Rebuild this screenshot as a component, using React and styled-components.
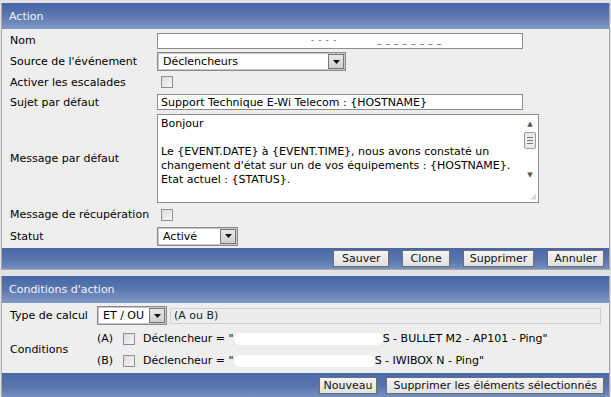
import React from 'react'
import styled, { createGlobalStyle } from 'styled-components'

const GlobalStyle = createGlobalStyle`
  html, body {
    margin: 0;
    padding: 0;
    background: #e2e2e2;
  }
  body {
    font-family: "DejaVu Sans", Verdana, sans-serif;
    font-size: 11px;
    color: #000;
  }
`

const Page = styled.div`
  width: 611px;
  padding-top: 3px;
  display: flex;
  flex-direction: column;
  gap: 6px;
`

const Panel = styled.div`
  margin: 0 1px 0 1px;
  border: 1px solid #a9a9a9;
  border-top: none;
  background: #eeeeee;
  display: flex;
  flex-direction: column;
`

const Bar = styled.div`
  height: ${p => p.$h}px;
  background: linear-gradient(to bottom, #4565a4 0%, #5b78b0 50%, #8199c5 100%);
  color: #f4f6fb;
  display: flex;
  align-items: center;
  padding: 0 7px;
  box-sizing: border-box;
`

const Footer = styled(Bar)`
  justify-content: flex-end;
  gap: ${p => p.$gap}px;
  padding: 0 5px 0 0;
  background: linear-gradient(to bottom, #4a68a6 0%, #5a77af 60%, #7590c0 100%);
`

const Body = styled.div`
  display: flex;
  flex-direction: column;
  padding: 1px 0;
`

const Row = styled.div`
  display: grid;
  grid-template-columns: ${p => p.$label || 155}px 1fr;
  align-items: center;
  height: ${p => p.$h}px;
`

const Label = styled.div`
  padding-left: 8px;
  white-space: nowrap;
`

const Field = styled.div`
  display: flex;
  align-items: center;
  gap: ${p => p.$gap || 8}px;
`

const TextBox = styled.div`
  width: ${p => p.$w}px;
  height: 16px;
  box-sizing: border-box;
  border: 1px solid #8c8c8c;
  background: #fff;
  padding: 0 3px;
  display: flex;
  align-items: center;
  white-space: nowrap;
  overflow: hidden;
`

const ReadBox = styled(TextBox)`
  border-color: #cfcfcf;
  background: #ececec;
  color: #222;
`

const Redacted = styled.span`
  color: #555;
  letter-spacing: 1px;
  font-size: 8px;
  margin-left: ${p => p.$ml}px;
`

const SelectBox = styled.div`
  width: ${p => p.$w}px;
  height: 19px;
  box-sizing: border-box;
  border: 1px solid #8a8a8a;
  outline: 1px solid #c8c8c8;
  outline-offset: -2px;
  background: #fff;
  display: flex;
  align-items: center;
  justify-content: space-between;
  padding-left: 5px;
  white-space: nowrap;
`

const ArrowBtn = styled.div`
  width: 16px;
  height: 15px;
  margin-right: 1px;
  box-sizing: border-box;
  border: 1px solid #777;
  background: linear-gradient(#e8e8e8, #cfcfcf);
  display: flex;
  align-items: center;
  justify-content: center;
`

const Check = styled.div`
  width: 12px;
  height: 12px;
  box-sizing: border-box;
  border: 1px solid #8f8f8f;
  background: linear-gradient(135deg, #dcdcdc, #f6f6f6);
  margin-left: ${p => p.$ml || 0}px;
`

const TextArea = styled.div`
  width: 382px;
  height: 89px;
  box-sizing: border-box;
  border: 1px solid #8c8c8c;
  background: #fff;
  display: flex;
`

const AreaText = styled.div`
  flex: 1;
  padding: 2px 3px;
  line-height: 14px;
  white-space: pre;
`

const Scroll = styled.div`
  width: 16px;
  display: flex;
  flex-direction: column;
  align-items: center;
  padding-top: 5px;
  color: #555;
  font-size: 7px;
  position: relative;
`

const Thumb = styled.div`
  width: 12px;
  height: 17px;
  margin-top: 4px;
  box-sizing: border-box;
  border: 1px solid #9a9a9a;
  background: #eaeaea;
  border-radius: 2px;
  display: flex;
  flex-direction: column;
  align-items: center;
  justify-content: center;
  gap: 2px;
`

const Grip = styled.span`
  width: 6px;
  height: 1px;
  background: #777;
`

const DownArrow = styled.div`
  margin-top: 22px;
`

const Resize = styled.div`
  position: absolute;
  right: 2px;
  bottom: 2px;
  width: 6px;
  height: 6px;
  background: radial-gradient(circle, #aaa 0.6px, transparent 0.8px) 0 0 / 2px 2px;
  clip-path: polygon(100% 0, 100% 100%, 0 100%);
`

const Button = styled.div`
  height: 17px;
  box-sizing: border-box;
  padding: 0 ${p => p.$px || 8}px;
  border: 1px solid #6e6e6e;
  background: linear-gradient(#f4f4f4, #e2e2e2);
  color: #111;
  display: flex;
  align-items: center;
  white-space: nowrap;
`

const CondList = styled.div`
  display: flex;
  flex-direction: column;
  gap: 8px;
`

const CondRow = styled.div`
  display: flex;
  align-items: center;
  height: 14px;
  white-space: nowrap;
`

const Tag = styled.span`
  width: 26px;
`

const CondText = styled.span`
  margin-left: 8px;
`

const Blank = styled.span`
  display: inline-block;
  width: ${p => p.$w}px;
  height: 12px;
  background: #fff;
  border-radius: 6px;
  vertical-align: middle;
`

const Arrow = () => (
  <svg width="7" height="4" viewBox="0 0 7 4">
    <path d="M0 0h7L3.5 4z" fill="#111" />
  </svg>
)

const Select = ({ w, value }) => (
  <SelectBox $w={w}>
    <span>{value}</span>
    <ArrowBtn><Arrow /></ArrowBtn>
  </SelectBox>
)

const message = `Bonjour

Le {EVENT.DATE} à {EVENT.TIME}, nous avons constaté un
changement d'état sur un de vos équipements : {HOSTNAME}.
Etat actuel : {STATUS}.`

const conditions = [
  { tag: '(A)', blank: 149, rest: 'S - BULLET M2 - AP101 - Ping"' },
  { tag: '(B)', blank: 141, rest: 'S - IWIBOX N - Ping"' }
]

export default function App() {
  return (
    <>
      <GlobalStyle />
      <Page>
        <Panel>
          <Bar $h={26}>Action</Bar>
          <Body>
            <Row $h={21}>
              <Label>Nom</Label>
              <Field>
                <TextBox $w={366}>
                  <Redacted $ml={150}>- - - -</Redacted>
                  <Redacted $ml={40}>_ _ _ _ _ _ _ _</Redacted>
                </TextBox>
              </Field>
            </Row>
            <Row $h={21}>
              <Label>Source de l'événement</Label>
              <Field><Select w={189} value="Déclencheurs" /></Field>
            </Row>
            <Row $h={20}>
              <Label>Activer les escalades</Label>
              <Field><Check $ml={4} /></Field>
            </Row>
            <Row $h={20}>
              <Label>Sujet par défaut</Label>
              <Field>
                <TextBox $w={366}>Support Technique E-Wi Telecom : {'{HOSTNAME}'}</TextBox>
              </Field>
            </Row>
            <Row $h={92}>
              <Label>Message par défaut</Label>
              <Field>
                <TextArea>
                  <AreaText>{message}</AreaText>
                  <Scroll>
                    <span>▲</span>
                    <Thumb><Grip /><Grip /><Grip /></Thumb>
                    <DownArrow>▼</DownArrow>
                    <Resize />
                  </Scroll>
                </TextArea>
              </Field>
            </Row>
            <Row $h={21}>
              <Label>Message de récupération</Label>
              <Field><Check $ml={4} /></Field>
            </Row>
            <Row $h={22}>
              <Label>Statut</Label>
              <Field><Select w={81} value="Activé" /></Field>
            </Row>
          </Body>
          <Footer $h={21} $gap={13}>
            <Button $px={8}>Sauver</Button>
            <Button $px={7}>Clone</Button>
            <Button $px={6}>Supprimer</Button>
            <Button $px={6}>Annuler</Button>
          </Footer>
        </Panel>
        <Panel>
          <Bar $h={27}>Conditions d'action</Bar>
          <Body>
            <Row $h={23} $label={95}>
              <Label>Type de calcul</Label>
              <Field $gap={3}>
                <Select w={70} value="ET / OU" />
                <ReadBox $w={431}>(A ou B)</ReadBox>
              </Field>
            </Row>
            <Row $h={45} $label={95}>
              <Label>Conditions</Label>
              <CondList>
                {conditions.map(c => (
                  <CondRow key={c.tag}>
                    <Tag>{c.tag}</Tag>
                    <Check />
                    <CondText>Déclencheur = "</CondText>
                    <Blank $w={c.blank} />
                    <span>{c.rest}</span>
                  </CondRow>
                ))}
              </CondList>
            </Row>
          </Body>
          <Footer $h={24} $gap={9}>
            <Button $px={4}>Nouveau</Button>
            <Button $px={6}>Supprimer les éléments sélectionnés</Button>
          </Footer>
        </Panel>
      </Page>
    </>
  )
}
